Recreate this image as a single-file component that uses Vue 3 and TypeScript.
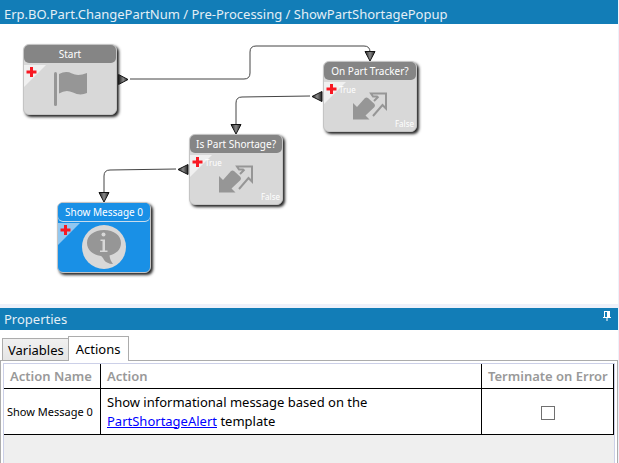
<script setup lang="ts">
import { ref } from 'vue'

type Icon = 'flag' | 'condition' | 'info'

interface FlowNode {
  id: string
  title: string
  icon: Icon
  x: number
  y: number
  selected?: boolean
}

const nodes: FlowNode[] = [
  { id: 'start', title: 'Start', icon: 'flag', x: 23, y: 20 },
  { id: 'tracker', title: 'On Part Tracker?', icon: 'condition', x: 323, y: 37 },
  { id: 'shortage', title: 'Is Part Shortage?', icon: 'condition', x: 189, y: 110 },
  { id: 'message', title: 'Show Message 0', icon: 'info', x: 57, y: 178, selected: true },
]

const links: string[] = [
  'M130 55H244Q250 55 250 49V28Q250 22 256 22H364Q370 22 370 28',
  'M310 72L242 73Q236 73 236 79V101',
  'M176 145L110 146Q104 146 104 152V169',
]

const arrows: string[] = [
  'M118.500 50.500V60.500L128 55.500Z',
  'M365 27.500H375L370 37Z',
  'M322 67.500V77.500L312 72.500Z',
  'M231 100.500H241L236 110Z',
  'M188 140.500V150.500L178 145.500Z',
  'M99 168.500H109L104 178Z',
]

const activeTab = ref<'Variables' | 'Actions'>('Actions')
const terminate = ref(false)
</script>

<template>
  <div class="designer">
    <header class="bar">
      <h1>Erp.BO.Part.ChangePartNum / Pre-Processing / ShowPartShortagePopup</h1>
    </header>

    <main class="canvas">
      <svg class="links" width="600" height="280" aria-hidden="true">
        <defs>
          <linearGradient id="arrow-fill">
            <stop offset="0" stop-color="#222" />
            <stop offset="0.500" stop-color="#888" />
            <stop offset="1" stop-color="#222" />
          </linearGradient>
        </defs>
        <path v-for="d in links" :key="d" class="link" :d="d" />
        <path v-for="d in arrows" :key="d" class="arrow" :d="d" />
      </svg>

      <article
        v-for="node in nodes"
        :key="node.id"
        class="node"
        :class="{ selected: node.selected }"
        :style="{ left: node.x + 'px', top: node.y + 'px' }"
      >
        <h2>{{ node.title }}</h2>
        <div class="node-body">
          <svg class="corner" viewBox="0 0 22 22" aria-hidden="true">
            <path class="fold" d="M0 0H22L0 22Z" />
            <path class="plus" d="M6 2H9V5.500H12.500V8.500H9V12H6V8.500H2.500V5.500H6Z" />
          </svg>

          <svg v-if="node.icon === 'flag'" class="glyph" viewBox="0 0 46 46" aria-hidden="true">
            <rect x="7" y="6" width="3" height="34" rx="1.500" />
            <path d="M12 8Q19 4.500 25 7.500T40 7V27Q33 30 26 26.500T12 27.500Z" />
          </svg>
          <svg v-else-if="node.icon === 'condition'" class="glyph" viewBox="0 0 46 46" aria-hidden="true">
            <path d="M6 36.500V20L10 24L18 15Q19.500 14 21 15L27.500 21Q28.500 22.500 27.500 24L18.500 32.500L22.500 36.500Z" />
            <path class="outline" d="M30.500 13.500H26L24 10.500H39V25.500L35.500 22L26 33M31.500 13.500L27 18" />
          </svg>
          <svg v-else class="glyph" viewBox="0 0 46 46" aria-hidden="true">
            <circle class="disc" cx="23" cy="23" r="22" />
            <path d="M23 6C13 6 6 11.500 6 19C6 26 12 31 20 32C23 34 22.500 37 26 38.500C28 39.500 30 40 32 40C30 37.500 29 35 28.500 31.500C35 30 40 25.500 40 19C40 11.500 33 6 23 6Z" />
            <circle class="disc" cx="22.500" cy="10.500" r="2" />
            <path class="disc" d="M19.500 15.500H24V26.500H26.500V28H19V26.500H21.500V17H19.500Z" />
          </svg>

          <template v-if="node.icon === 'condition'">
            <span class="branch yes">True</span>
            <span class="branch no">False</span>
          </template>
        </div>
      </article>
    </main>

    <section class="properties">
      <header class="bar panel-bar">
        <h2>Properties</h2>
        <button class="pin" type="button" aria-label="Pin panel">
          <svg viewBox="0 0 8 10" width="8" height="10" aria-hidden="true">
            <path d="M1 0H7V6H8V7H4.500V10H3.500V7H0V6H1ZM2 1V6H4V1Z" fill-rule="evenodd" />
          </svg>
        </button>
      </header>

      <div class="tabs" role="tablist">
        <button
          type="button"
          role="tab"
          :aria-selected="activeTab === 'Variables'"
          @click="activeTab = 'Variables'"
        >Variables</button>
        <button
          type="button"
          role="tab"
          :aria-selected="activeTab === 'Actions'"
          @click="activeTab = 'Actions'"
        >Actions</button>
      </div>

      <div class="tab-panel" role="tabpanel">
        <div class="grid">
          <table>
            <colgroup>
              <col class="col-name" />
              <col />
              <col class="col-error" />
            </colgroup>
            <thead>
              <tr>
                <th scope="col">Action Name</th>
                <th scope="col">Action</th>
                <th scope="col" id="terminate-label">Terminate on Error</th>
              </tr>
            </thead>
            <tbody>
              <tr>
                <td class="name">Show Message 0</td>
                <td class="action">
                  Show informational message based on the <a href="#PartShortageAlert">PartShortageAlert</a> template
                </td>
                <td class="check">
                  <input v-model="terminate" type="checkbox" aria-labelledby="terminate-label" />
                </td>
              </tr>
            </tbody>
          </table>
        </div>
      </div>
    </section>
  </div>
</template>

<style>
body {
  background: #fff;
}
</style>

<style scoped>
.designer {
  display: flex;
  flex-direction: column;
  box-sizing: border-box;
  min-height: 100vh;
  border-right: 1px solid #eef1fa;
  font-family: "Segoe UI", "Noto Sans", "Open Sans", sans-serif;
  font-size: 13px;
  color: #000;
}

h1,
h2 {
  margin: 0;
  font-weight: 400;
}

.bar {
  display: flex;
  align-items: center;
  height: 24px;
  padding: 4px 4px 0;
  box-sizing: border-box;
  background: #127db7;
  color: #e4eff6;
}

.bar h1,
.bar h2 {
  font-size: 13px;
  line-height: 20px;
  white-space: nowrap;
}

.canvas {
  position: relative;
  height: 280px;
  overflow: hidden;
  background: #fff;
}

.links {
  position: absolute;
  left: 0;
  top: 0;
}

.link {
  fill: none;
  stroke: #444;
}

.arrow {
  fill: url(#arrow-fill);
  stroke: #111;
}

.node {
  position: absolute;
  width: 94px;
  height: 71px;
  box-sizing: border-box;
  border: 1px solid #c4c4c4;
  border-radius: 6px;
  background: #d8d8d8;
  box-shadow: 2px 2px 3px #222;
}

.node h2 {
  height: 18px;
  border-radius: 5px;
  background: #858585;
  color: #fff;
  font-size: 10px;
  line-height: 18px;
  text-align: center;
  white-space: nowrap;
}

.node-body {
  position: relative;
  display: flex;
  justify-content: center;
  height: 51px;
}

.corner {
  position: absolute;
  left: 0;
  top: 2px;
  width: 22px;
  height: 22px;
}

.fold {
  fill: #f0f0f0;
}

.plus {
  fill: #f81822;
}

.glyph {
  width: 46px;
  height: 46px;
  margin-top: 3px;
  fill: #969696;
}

.outline {
  fill: none;
  stroke: #969696;
  stroke-width: 2;
}

.disc {
  fill: #d8d8d8;
}

.branch {
  position: absolute;
  color: #fff;
  font-size: 8px;
  line-height: 12px;
}

.yes {
  left: 15px;
  top: 4px;
}

.no {
  right: 2px;
  bottom: 1px;
}

.selected {
  background: #1990e6;
}

.selected h2 {
  background: #1990e6;
  box-shadow: 0 1px #c8dcec;
}

.selected .fold {
  fill: #91c7f0;
}

.properties {
  display: flex;
  flex: 1;
  flex-direction: column;
  border-top: 4px solid #eef1fa;
}

.panel-bar {
  justify-content: space-between;
  height: 22px;
  padding-top: 0;
}

.pin {
  display: flex;
  align-self: flex-start;
  padding: 3px;
  border: 0;
  background: none;
}

.pin svg {
  fill: #fff;
}

.tabs {
  display: flex;
  align-items: flex-end;
  height: 30px;
  padding-left: 2px;
}

.tabs button {
  height: 22px;
  padding: 0 4px 0 5px;
  border: 1px solid #acacac;
  border-width: 1px 0 0 1px;
  background: linear-gradient(#f0f0f0, #e5e5e5);
  color: #000;
  font: inherit;
  line-height: 20px;
}

.tabs button[aria-selected="true"] {
  z-index: 1;
  height: 25px;
  margin-bottom: -1px;
  padding: 0 7px;
  border-right-width: 1px;
  background: #fff;
}

.tab-panel {
  display: flex;
  flex: 1;
  padding: 2px 2px 0;
  border: 1px solid #acacac;
  border-bottom: 0;
}

.grid {
  flex: 1;
  border: 1px solid #ccd0e8;
  border-bottom: 0;
  background: #efefef;
}

table {
  width: 100%;
  border-collapse: separate;
  border-spacing: 0;
  table-layout: fixed;
  background: #fff;
}

.col-name {
  width: 97px;
}

.col-error {
  width: 132px;
}

th,
td {
  padding: 0 6px;
  border-right: 1px solid #000;
  border-bottom: 1px solid #000;
  text-align: left;
}

th {
  height: 24px;
  color: #999;
  font-size: 13px;
  font-weight: 600;
  line-height: 20px;
  white-space: nowrap;
}

td {
  height: 45px;
}

.name {
  padding: 0 3px;
  font-size: 11px;
  white-space: nowrap;
}

.action {
  font-size: 13px;
  line-height: 19px;
}

.action a {
  color: #00f;
}

.check {
  text-align: center;
}

.check input {
  width: 14px;
  height: 14px;
  margin: 0;
  border: 1px solid #707070;
  background: #fff;
  appearance: none;
  vertical-align: middle;
}

.check input:checked {
  box-shadow: inset 0 0 0 3px #fff;
  background: #333;
}
</style>
